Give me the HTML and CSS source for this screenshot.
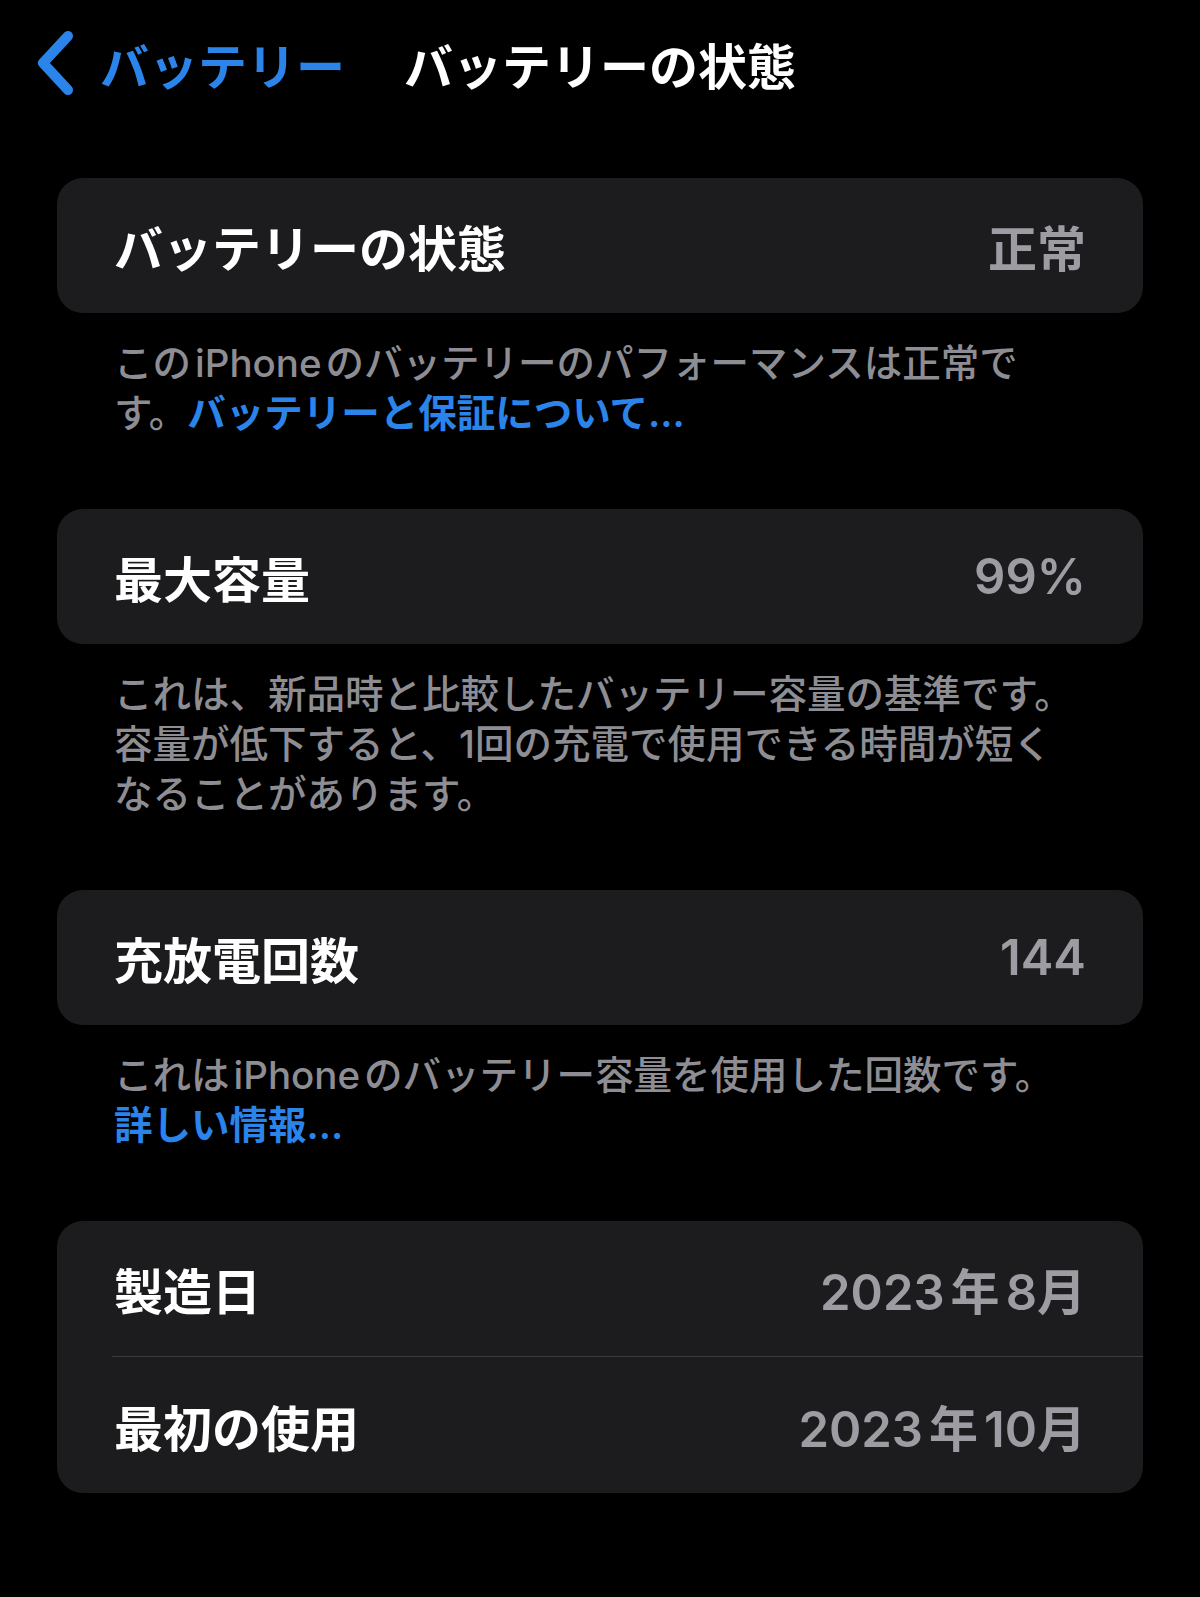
FILE: index.html
```html
<!DOCTYPE html>
<html lang="ja">
<head>
  <meta charset="UTF-8">
  <title>バッテリーの状態</title>
  <link rel="stylesheet" href="styles.css">
</head>
<body>
  <header class="nav">
    <a class="nav-back" href="#">
      <svg class="chevron" width="40" height="64" viewBox="0 0 40 64">
        <path d="M32 5 L7 32 L32 59" fill="none" stroke="currentColor" stroke-width="10" stroke-linecap="round" stroke-linejoin="round"/>
      </svg>
      <span>バッテリー</span>
    </a>
    <h1 class="nav-title">バッテリーの状態</h1>
    <div></div>
  </header>

  <main class="content">
    <section class="group">
      <div class="card">
        <div class="row">
          <span class="label">バッテリーの状態</span>
          <span class="value">正常</span>
        </div>
      </div>
      <p class="note">この<span class="latin">iPhone</span>のバッテリーのパフォーマンスは正常で<br>す。<a href="#">バッテリーと保証について...</a></p>
    </section>

    <section class="group">
      <div class="card">
        <div class="row">
          <span class="label">最大容量</span>
          <span class="value">99%</span>
        </div>
      </div>
      <p class="note">これは、新品時と比較したバッテリー容量の基準です。<br>容量が低下すると、1回の充電で使用できる時間が短く<br>なることがあります。</p>
    </section>

    <section class="group">
      <div class="card">
        <div class="row">
          <span class="label">充放電回数</span>
          <span class="value">144</span>
        </div>
      </div>
      <p class="note">これは<span class="latin">iPhone</span>のバッテリー容量を使用した回数です。<br><a href="#">詳しい情報...</a></p>
    </section>

    <section class="group">
      <div class="card">
        <div class="row">
          <span class="label">製造日</span>
          <span class="value">2023<span class="unit">年</span>8月</span>
        </div>
        <div class="row">
          <span class="label">最初の使用</span>
          <span class="value">2023<span class="unit">年</span>10月</span>
        </div>
      </div>
    </section>
  </main>
</body>
</html>
```

FILE: styles.css
```css
:root {
  --bg: #000000;
  --card-bg: #1c1c1e;
  --text: #ffffff;
  --value: #9c9ca2;
  --note: #8d8d93;
  --blue: #2a84ea;
  --separator: #3c3c3e;
}

* {
  margin: 0;
  padding: 0;
  box-sizing: border-box;
}

body {
  width: 1200px;
  min-height: 1597px;
  background: var(--bg);
  color: var(--text);
  font-family: Inter, "Noto Sans CJK JP", "Noto Sans", sans-serif;
}

a {
  color: var(--blue);
  text-decoration: none;
}

/* barra de navegación */
.nav {
  height: 126px;
  display: grid;
  grid-template-columns: 1fr auto 1fr;
  align-items: center;
}
.nav-back {
  display: flex;
  align-items: center;
  gap: 24px;
  padding-left: 36px;
  font-size: 49px;
  font-weight: 700;
  color: var(--blue);
}
.chevron {
  display: block;
}
.nav-title {
  font-size: 49px;
  font-weight: 700;
}

.content {
  padding: 52px 57px 0;
}

.group + .group {
  margin-top: 71px;
}

.card {
  background: var(--card-bg);
  border-radius: 26px;
  overflow: hidden;
}
.row {
  height: 135px;
  margin-left: 55px;
  padding-right: 57px;
  display: flex;
  align-items: center;
  justify-content: space-between;
  font-size: 49px;
}
.row + .row {
  height: 137px;
  border-top: 1px solid var(--separator);
}
.label {
  font-weight: 700;
  padding-left: 2px;
}
.value {
  color: var(--value);
  font-weight: 600;
}
.unit {
  margin: 0 6px;
}

.note {
  margin-top: 25px;
  padding: 0 57px;
  font-size: 38.5px;
  line-height: 50px;
  font-weight: 500;
  color: var(--note);
}
.note .latin {
  margin: 0 4px;
}
.note a {
  font-weight: 600;
}
```
